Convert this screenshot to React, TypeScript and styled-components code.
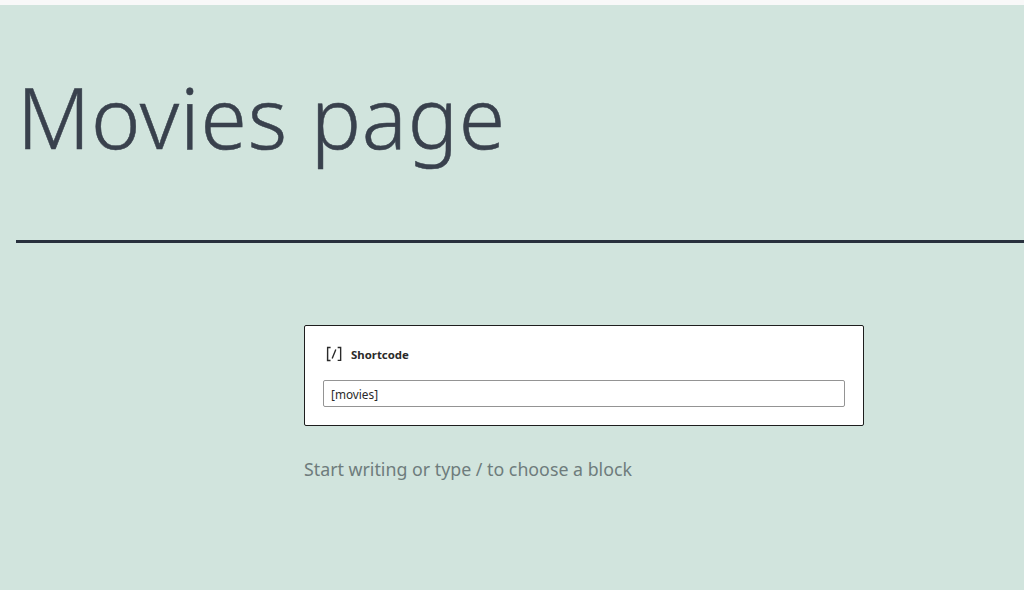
import React from 'react'
import styled, { createGlobalStyle } from 'styled-components'

const GlobalStyle = createGlobalStyle`
  html, body {
    margin: 0;
    padding: 0;
    height: 590px;
    overflow: hidden;
    background: #f8f8f8;
  }
  body {
    font-family: 'Noto Sans', 'Open Sans', sans-serif;
  }
`

const Page = styled.div`
  margin-top: 5px;
  height: 585px;
  background: #d1e4dd;
  display: flex;
  flex-direction: column;
`

const Title = styled.h1`
  margin: 0;
  padding: 54px 0 0 17px;
  height: 177px;
  box-sizing: border-box;
  font-size: 84px;
  line-height: 116px;
  font-weight: 300;
  letter-spacing: 0.85px;
  color: #39414d;
  -webkit-text-stroke: 0.5px #39414d;
`

const Divider = styled.hr`
  margin: 58px 0 0 16px;
  border: 0;
  height: 3px;
  background: #28303d;
`

const Column = styled.div`
  width: 560px;
  margin: 82px 0 0 304px;
`

const Card = styled.div`
  box-sizing: border-box;
  height: 101px;
  padding: 18px 18px 0;
  background: #fff;
  border: 1px solid #1e1e1e;
  border-radius: 2px;
`

const BlockLabel = styled.div`
  display: flex;
  align-items: center;
  gap: 6px;
  height: 20px;
  font-size: 11.4px;
  font-weight: 700;
  color: #2a2a2a;
`

const Field = styled.input`
  display: block;
  box-sizing: border-box;
  width: 100%;
  height: 27px;
  margin-top: 16px;
  padding: 1px 7px 0;
  border: 1px solid #949494;
  border-radius: 2px;
  background: #fff;
  font-family: inherit;
  font-size: 11.8px;
  color: #2a2a2a;
  outline: none;
`

const Placeholder = styled.p`
  margin: 30px 0 0;
  font-size: 17.8px;
  line-height: 26px;
  color: #6e7c7c;
`

const ShortcodeIcon = () => (
  <svg width="22" height="22" viewBox="0 0 24 24" fill="currentColor" aria-hidden="true">
    <path d="M16 4.2v1.5h2.5v12.5H16v1.5h4V4.2h-4zM4.2 19.8h4v-1.5H5.8V5.8h2.5V4.2h-4l-.1 15.6zm5.1-3.1l1.4.6 4-10-1.4-.6-4 10z" />
  </svg>
)

export default function App() {
  return (
    <>
      <GlobalStyle />
      <Page>
        <Title>Movies page</Title>
        <Divider />
        <Column>
          <Card>
            <BlockLabel>
              <ShortcodeIcon />
              Shortcode
            </BlockLabel>
            <Field defaultValue="[movies]" />
          </Card>
          <Placeholder>Start writing or type / to choose a block</Placeholder>
        </Column>
      </Page>
    </>
  )
}
